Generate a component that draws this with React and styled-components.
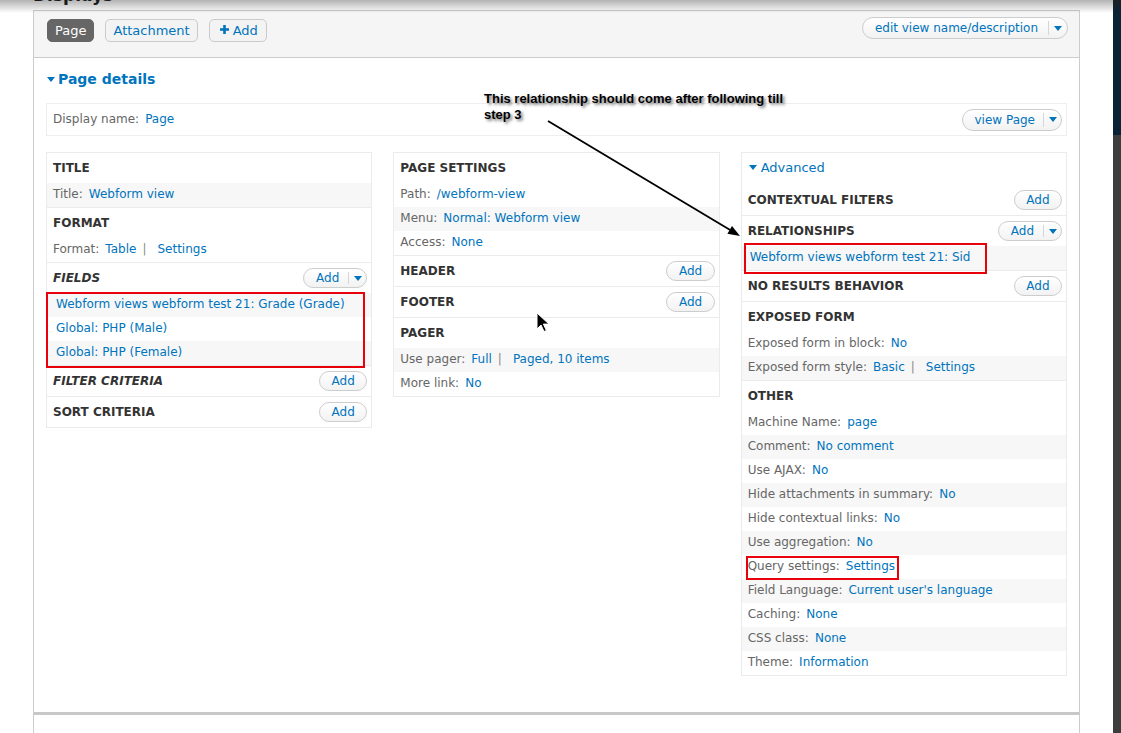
import React from 'react';
import styled, { createGlobalStyle } from 'styled-components';

const GlobalStyle = createGlobalStyle`
  * { box-sizing: border-box; }
  html, body { margin: 0; padding: 0; background: #fff; }
  body {
    font-family: "DejaVu Sans", Verdana, sans-serif;
    font-size: 12px;
    color: #333;
  }
`;

const Screen = styled.div`
  display: flex;
  width: 1121px;
  height: 733px;
  overflow: hidden;
`;

const Main = styled.div`
  position: relative;
  flex: 1;
  display: flex;
  flex-direction: column;
  padding-left: 33px;
`;

const SideStrip = styled.div`
  width: 8px;
  display: flex;
  flex-direction: column;
`;

const StripTop = styled.div`
  height: 135px;
  background: linear-gradient(#1b1f24, #0b2235 12px, #0b2235);
`;

const StripBottom = styled.div`
  flex: 1;
  background: #3d3d3d;
`;

const TopShadow = styled.div`
  position: absolute;
  top: 0;
  left: 0;
  right: 0;
  height: 13px;
  background: linear-gradient(rgba(0, 0, 0, 0.3), rgba(0, 0, 0, 0));
  pointer-events: none;
  z-index: 5;
`;

const SectionTitle = styled.h2`
  margin: 0;
  height: 10px;
  overflow: hidden;
  font-size: 17px;
  line-height: 17px;
  font-weight: bold;
  color: #222;

  span {
    display: block;
    margin-top: -13px;
  }
`;

const Panel = styled.div`
  width: 1047px;
  border: 1px solid #ccc;
  border-bottom: 3px solid #c8c8c8;
`;

const NextPanel = styled.div`
  width: 1047px;
  flex: 1;
  border-left: 1px solid #ccc;
  border-right: 1px solid #ccc;
`;

const TopBar = styled.div`
  height: 47px;
  display: flex;
  align-items: flex-start;
  justify-content: space-between;
  padding: 8px 11px 0 13px;
  background: #f5f5f5;
  border-bottom: 1px solid #ccc;
`;

const Tabs = styled.div`
  display: flex;
  gap: 11px;
`;

const Tab = styled.span`
  display: inline-flex;
  align-items: center;
  gap: 4px;
  height: 23px;
  padding: ${({ $pad }) => $pad || '0 7px'};
  border: 1px solid ${({ $active }) => ($active ? '#666' : '#cacaca')};
  border-radius: 5px;
  background: ${({ $active }) => ($active ? '#666' : '#f3f3f3')};
  color: ${({ $active }) => ($active ? '#fff' : '#0074bd')};
  font-size: 13px;
  line-height: 21px;

  svg {
    margin-bottom: 2px;
  }
`;

const DropButton = styled.span`
  display: inline-flex;
  align-items: stretch;
  height: ${({ $h }) => $h}px;
  margin-top: ${({ $mt }) => $mt || 0}px;
  border: 1px solid #cdcdcd;
  border-radius: ${({ $h }) => $h / 2}px;
  background: linear-gradient(#fff, #f2f2f2);
  color: #0074bd;
  font-size: 12px;
  white-space: nowrap;
`;

const DropLabel = styled.span`
  display: flex;
  align-items: center;
  padding: ${({ $pad }) => $pad};
`;

const DropToggle = styled.span`
  display: flex;
  align-items: center;
  justify-content: center;
  width: ${({ $w }) => $w}px;
  margin: 3px 0;
  border-left: 1px solid #d6d6d6;
`;

const Caret = styled.span`
  width: 0;
  height: 0;
  border-left: 4px solid transparent;
  border-right: 4px solid transparent;
  border-top: 5px solid #0074bd;
`;

const Body = styled.div`
  padding: 0 12px 36px;
`;

const Toggle = styled.div`
  display: flex;
  align-items: center;
  gap: ${({ $gap }) => $gap}px;
  padding: ${({ $pad }) => $pad};
  color: #0074bd;
  font-size: ${({ $size }) => $size}px;
  font-weight: ${({ $bold }) => ($bold ? 'bold' : 'normal')};
  line-height: 17px;
`;

const DownTriangle = styled.span`
  width: 0;
  height: 0;
  margin-left: 1px;
  border-left: 4px solid transparent;
  border-right: 4px solid transparent;
  border-top: 5px solid #0074bd;
`;

const DisplayBox = styled.div`
  height: 33px;
  display: flex;
  align-items: center;
  justify-content: space-between;
  padding: 0 4px 0 6px;
  border: 1px solid #eee;
`;

const DisplayName = styled.span`
  padding-bottom: 2px;
`;

const Columns = styled.div`
  display: grid;
  grid-template-columns: repeat(3, 1fr);
  gap: 21px;
  align-items: start;
  margin-top: 16px;
`;

const Column = styled.div`
  border: 1px solid #ebebeb;
`;

const Bucket = styled.div`
  border-bottom: 1px solid #ebebeb;

  &:last-child {
    border-bottom: none;
  }
`;

const BucketHeader = styled.div`
  height: 30px;
  display: flex;
  align-items: center;
  justify-content: space-between;
  padding: 0 4px 0 6px;
`;

const BucketTitle = styled.h3`
  margin: 0;
  font-size: 12px;
  font-weight: bold;
  font-style: ${({ $italic }) => ($italic ? 'italic' : 'normal')};
  text-transform: uppercase;
  color: #333;
`;

const AddButton = styled.span`
  display: inline-flex;
  align-items: center;
  height: 20px;
  padding: 0 11.5px;
  border: 1px solid #cdcdcd;
  border-radius: 10px;
  background: linear-gradient(#fff, #f2f2f2);
  color: #0074bd;
  font-size: 12px;
`;

const ItemGroup = styled.div`
  position: relative;
`;

const Item = styled.div`
  position: relative;
  height: 24px;
  display: flex;
  align-items: center;
  padding: 0 6px 2px ${({ $indent }) => $indent || 6}px;
  background: ${({ $shade }) => ($shade ? '#f7f7f7' : 'transparent')};
  white-space: nowrap;
`;

const Label = styled.span`
  color: #666;
  margin-right: 6px;
`;

const Link = styled.a`
  color: #0074bd;
  text-decoration: none;
`;

const Sep = styled.span`
  color: #8a8a8a;
  margin: 0 11px 0 6px;
`;

const RedBox = styled.span`
  position: absolute;
  top: ${({ $t }) => $t}px;
  left: ${({ $l }) => $l}px;
  width: ${({ $w }) => $w}px;
  height: ${({ $h }) => $h}px;
  border: 2px solid #e8000b;
  pointer-events: none;
  z-index: 2;
`;

const Callout = styled.div`
  position: absolute;
  left: 484px;
  top: 91px;
  white-space: nowrap;
  font-family: "Liberation Sans", Arial, sans-serif;
  font-size: 13px;
  font-weight: bold;
  line-height: 16px;
  color: #000;
  text-shadow: 2px 2px 3px rgba(0, 0, 0, 0.55);
  z-index: 3;
`;

const ArrowSvg = styled.svg`
  position: absolute;
  left: 540px;
  top: 112px;
  z-index: 3;
  overflow: visible;
`;

const Cursor = styled.svg`
  position: absolute;
  left: 536px;
  top: 312px;
  z-index: 4;
`;

const Plus = () => (
  <svg width="9" height="9" viewBox="0 0 9 9">
    <path d="M3.2 0h2.6v3.2H9v2.6H5.8V9H3.2V5.8H0V3.2h3.2z" fill="#0074bd" />
  </svg>
);

const Drop = ({ text, h = 20, pad = '0 9px 0 12px', w = 18, mt }) => (
  <DropButton $h={h} $mt={mt}>
    <DropLabel $pad={pad}>{text}</DropLabel>
    <DropToggle $w={w}>
      <Caret />
    </DropToggle>
  </DropButton>
);

const Setting = ({ label, links = [], shade, indent, children }) => (
  <Item $shade={shade} $indent={indent}>
    {label && <Label>{label}</Label>}
    {links.map((l, i) => (
      <React.Fragment key={l}>
        {i > 0 && <Sep>|</Sep>}
        <Link href="#">{l}</Link>
      </React.Fragment>
    ))}
    {children}
  </Item>
);

const Header = ({ title, italic, button }) => (
  <BucketHeader>
    <BucketTitle $italic={italic}>{title}</BucketTitle>
    {button === 'add' && <AddButton>Add</AddButton>}
    {button === 'drop' && <Drop text="Add" />}
  </BucketHeader>
);

const otherRows = [
  ['Machine Name:', 'page'],
  ['Comment:', 'No comment'],
  ['Use AJAX:', 'No'],
  ['Hide attachments in summary:', 'No'],
  ['Hide contextual links:', 'No'],
  ['Use aggregation:', 'No'],
  ['Query settings:', 'Settings'],
  ["Field Language:", "Current user's language"],
  ['Caching:', 'None'],
  ['CSS class:', 'None'],
  ['Theme:', 'Information'],
];

const App = () => (
  <>
    <GlobalStyle />
    <Screen>
      <Main>
        <TopShadow />
        <SectionTitle>
          <span>Displays</span>
        </SectionTitle>

        <Panel>
          <TopBar>
            <Tabs>
              <Tab $active>Page</Tab>
              <Tab>Attachment</Tab>
              <Tab $pad="0 8px 0 10px">
                <Plus />
                Add
              </Tab>
            </Tabs>
            <Drop text="edit view name/description" h={22} pad="0 10px 0 12px" w={19} mt={-2} />
          </TopBar>

          <Body>
            <Toggle $pad="13px 0 15px" $gap={3} $size={14} $bold>
              <DownTriangle />
              Page details
            </Toggle>

            <DisplayBox>
              <DisplayName>
                <Label>Display name:</Label>
                <Link href="#">Page</Link>
              </DisplayName>
              <Drop text="view Page" h={22} pad="0 8px 0 12px" />
            </DisplayBox>

            <Columns>
              <Column>
                <Bucket>
                  <Header title="Title" />
                  <Setting label="Title:" links={['Webform view']} shade />
                </Bucket>
                <Bucket>
                  <Header title="Format" />
                  <Setting label="Format:" links={['Table', 'Settings']} />
                </Bucket>
                <Bucket>
                  <Header title="Fields" italic button="drop" />
                  <ItemGroup>
                    <Setting links={['Webform views webform test 21: Grade (Grade)']} shade indent={9} />
                    <Setting links={['Global: PHP (Male)']} indent={9} />
                    <Setting links={['Global: PHP (Female)']} shade indent={9} />
                    <RedBox $t={-1} $l={-1} $w={319} $h={76} />
                  </ItemGroup>
                </Bucket>
                <Bucket>
                  <Header title="Filter criteria" italic button="add" />
                </Bucket>
                <Bucket>
                  <Header title="Sort criteria" button="add" />
                </Bucket>
              </Column>

              <Column>
                <Bucket>
                  <Header title="Page settings" />
                  <Setting label="Path:" links={['/webform-view']} />
                  <Setting label="Menu:" links={['Normal: Webform view']} shade />
                  <Setting label="Access:" links={['None']} />
                </Bucket>
                <Bucket>
                  <Header title="Header" button="add" />
                </Bucket>
                <Bucket>
                  <Header title="Footer" button="add" />
                </Bucket>
                <Bucket>
                  <Header title="Pager" />
                  <Setting label="Use pager:" links={['Full', 'Paged, 10 items']} shade />
                  <Setting label="More link:" links={['No']} />
                </Bucket>
              </Column>

              <Column>
                <Toggle $pad="6px 6px 9px" $gap={4} $size={13}>
                  <DownTriangle />
                  Advanced
                </Toggle>
                <Bucket>
                  <Header title="Contextual filters" button="add" />
                </Bucket>
                <Bucket>
                  <Header title="Relationships" button="drop" />
                  <Setting links={['Webform views webform test 21: Sid']} shade indent={8}>
                    <RedBox $t={-3} $l={2} $w={243} $h={31} />
                  </Setting>
                </Bucket>
                <Bucket>
                  <Header title="No results behavior" button="add" />
                </Bucket>
                <Bucket>
                  <Header title="Exposed form" />
                  <Setting label="Exposed form in block:" links={['No']} />
                  <Setting label="Exposed form style:" links={['Basic', 'Settings']} shade />
                </Bucket>
                <Bucket>
                  <Header title="Other" />
                  {otherRows.map(([label, value], i) => (
                    <Setting key={label} label={label} links={[value]} shade={i % 2 === 1}>
                      {label === 'Query settings:' && <RedBox $t={1} $l={4} $w={153} $h={24} />}
                    </Setting>
                  ))}
                </Bucket>
              </Column>
            </Columns>
          </Body>
        </Panel>
        <NextPanel />

        <Callout>
          This relationship should come after following till
          <br />
          step 3
        </Callout>

        <ArrowSvg width="210" height="130" viewBox="0 0 210 130">
          <line x1="8" y1="9" x2="191" y2="118.5" stroke="#000" strokeWidth="1.8" />
          <polygon points="200,124 187.4,121.7 192,113.9" fill="#000" />
        </ArrowSvg>

        <Cursor width="14" height="21" viewBox="0 0 14 21">
          <path d="M1 1v16l4-4 3 6.5 2.4-1-3-6.4H13z" fill="#000" stroke="#fff" strokeWidth="1" strokeLinejoin="round" />
        </Cursor>
      </Main>
      <SideStrip>
        <StripTop />
        <StripBottom />
      </SideStrip>
    </Screen>
  </>
);

export default App;
